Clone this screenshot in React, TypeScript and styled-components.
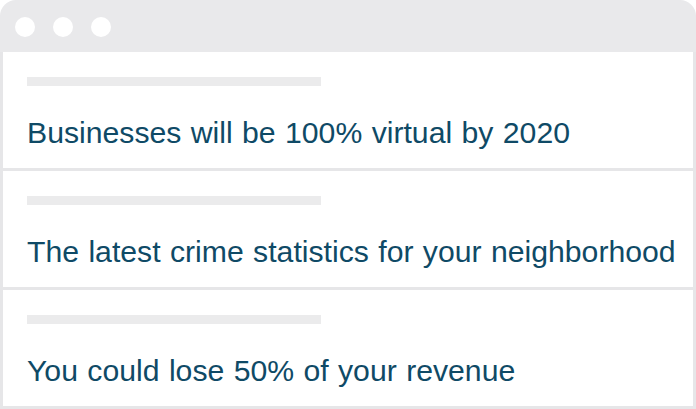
import React from "react";
import styled, { createGlobalStyle } from "styled-components";

const Global = createGlobalStyle`
  html, body { margin: 0; padding: 0; background: #ffffff; }
  body { font-family: "Liberation Sans", Arial, sans-serif; }
`;

const Frame = styled.div`
  width: 696px;
  height: 409px;
  display: flex;
  flex-direction: column;
  box-sizing: border-box;
`;

const Header = styled.div`
  height: 52px;
  flex: none;
  background: #e9e9eb;
  border-radius: 16px 16px 0 0;
  display: flex;
  align-items: center;
  gap: 18px;
  padding: 0 0 0 15px;
  box-sizing: border-box;
`;

const Dot = styled.span`
  width: 20px;
  height: 20px;
  border-radius: 50%;
  background: #ffffff;
  margin-top: 2px;
`;

const Body = styled.div`
  flex: 1;
  display: flex;
  flex-direction: column;
  border: 3px solid #e6e6e8;
  border-top: none;
  box-sizing: border-box;
`;

const Row = styled.div<{ $last?: boolean }>`
  flex: 1;
  display: flex;
  flex-direction: column;
  padding: 25px 0 0 24px;
  border-bottom: ${(p) => (p.$last ? "none" : "3px solid #e6e6e8")};
`;

const Bar = styled.div`
  width: 294px;
  height: 9px;
  background: #ebebec;
`;

const Title = styled.div`
  margin-top: 31px;
  font-size: 30.2px;
  word-spacing: 1px;
  line-height: 32px;
  color: #0f4a66;
  white-space: nowrap;
`;

const items = [
  "Businesses will be 100% virtual by 2020",
  "The latest crime statistics for your neighborhood",
  "You could lose 50% of your revenue",
];

export default function App() {
  return (
    <>
      <Global />
      <Frame>
        <Header>
          <Dot />
          <Dot />
          <Dot />
        </Header>
        <Body>
          {items.map((t, i) => (
            <Row key={i} $last={i === items.length - 1}>
              <Bar />
              <Title>{t}</Title>
            </Row>
          ))}
        </Body>
      </Frame>
    </>
  );
}
